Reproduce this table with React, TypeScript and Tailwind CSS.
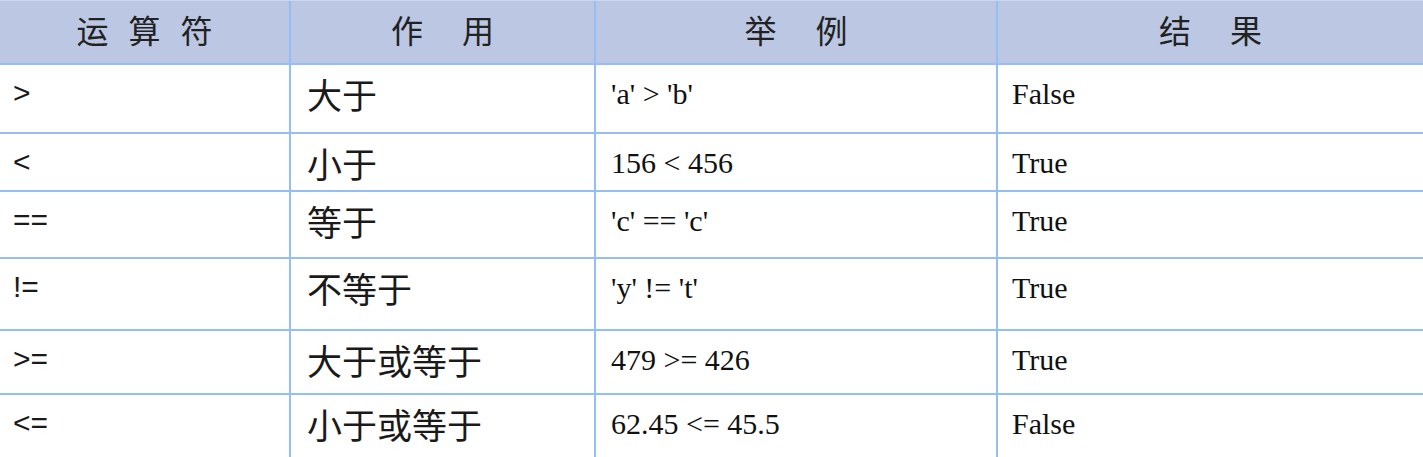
import React from "react";

const rows = [
  { op: ">", name: "大于", ex: "'a' > 'b'", res: "False", h: "h-[69px]" },
  { op: "<", name: "小于", ex: "156 < 456", res: "True", h: "h-[58px]" },
  { op: "==", name: "等于", ex: "'c' == 'c'", res: "True", h: "h-[67px]" },
  { op: "!=", name: "不等于", ex: "'y' != 't'", res: "True", h: "h-[72px]" },
  { op: ">=", name: "大于或等于", ex: "479 >= 426", res: "True", h: "h-[64px]" },
  { op: "<=", name: "小于或等于", ex: "62.45 <= 45.5", res: "False", h: "h-[70px]" },
];

function HeaderCell({ chars, gap, border }: { chars: string[]; gap: string; border: boolean }) {
  return (
    <div
      className={`h-[64px] bg-[#bcc8e3] border-b-2 border-[#93bff4] flex justify-center items-start pt-[11px] ${
        border ? "border-r-2" : ""
      }`}
    >
      <div className={`flex ${gap} text-[32px] leading-[34px] text-[#222] font-['Noto_Sans_CJK_SC',sans-serif]`}>
        {chars.map((c) => (
          <span key={c}>{c}</span>
        ))}
      </div>
    </div>
  );
}

export default function App() {
  return (
    <div className="w-[1423px] h-[457px] overflow-hidden bg-white border-t border-[#cbd8f2]">
      <div className="grid grid-cols-[291px_305px_402px_1fr]">
        <HeaderCell chars={["运", "算", "符"]} gap="gap-[20px]" border />
        <HeaderCell chars={["作", "用"]} gap="gap-[39px]" border />
        <HeaderCell chars={["举", "例"]} gap="gap-[39px]" border />
        <HeaderCell chars={["结", "果"]} gap="gap-[39px]" border={false} />
        {rows.map((r) => (
          <React.Fragment key={r.op}>
            <div
              className={`${r.h} border-r-2 border-b-2 border-[#93bff4] pl-[13px] pt-[13px] text-[30px] leading-[30px] text-[#1a1a1a] font-['Liberation_Sans',Arial,sans-serif]`}
            >
              {r.op}
            </div>
            <div
              className={`${r.h} border-r-2 border-b-2 border-[#93bff4] pl-[16px] pt-[11px] text-[35px] leading-[36px] text-[#1a1a1a] font-['Noto_Sans_CJK_SC',sans-serif]`}
            >
              {r.name}
            </div>
            <div
              className={`${r.h} border-r-2 border-b-2 border-[#93bff4] pl-[15px] pt-[14px] text-[30px] leading-[30px] text-[#111] font-['Liberation_Serif','Times_New_Roman',serif]`}
            >
              {r.ex}
            </div>
            <div
              className={`${r.h} border-b-2 border-[#93bff4] pl-[14px] pt-[14px] text-[30px] leading-[30px] text-[#111] font-['Liberation_Serif','Times_New_Roman',serif]`}
            >
              {r.res}
            </div>
          </React.Fragment>
        ))}
      </div>
    </div>
  );
}
